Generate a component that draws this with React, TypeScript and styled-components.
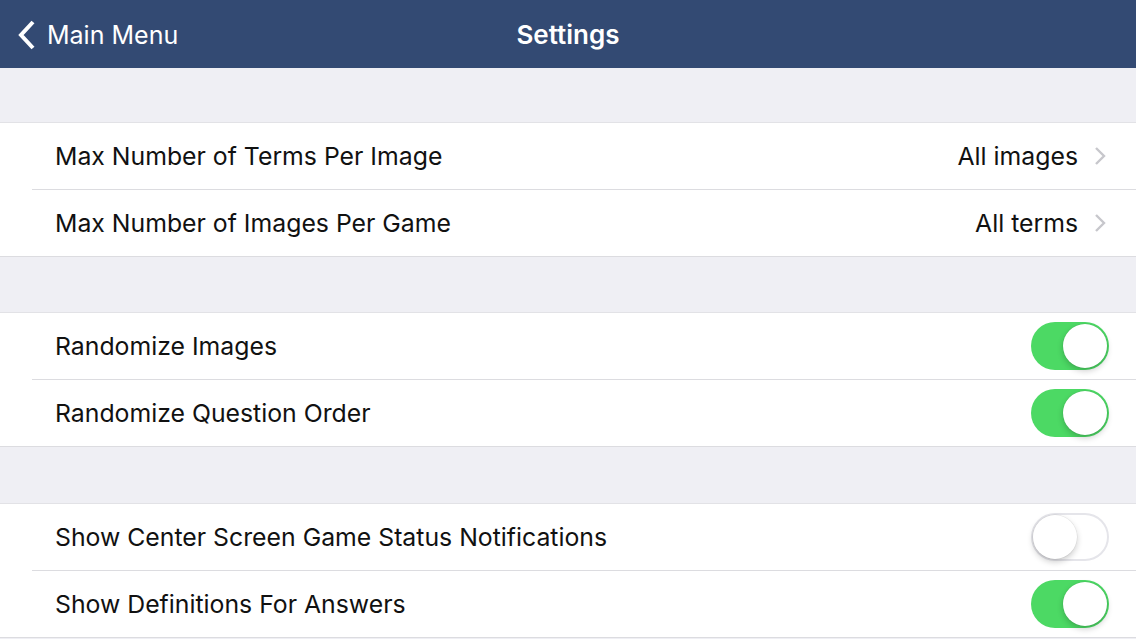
import React from "react";
import styled, { createGlobalStyle } from "styled-components";

const Global = createGlobalStyle`
  html, body { margin: 0; padding: 0; background: #efeff4; }
  body { font-family: Inter, "Liberation Sans", Arial, sans-serif; -webkit-font-smoothing: antialiased; }
  * { box-sizing: border-box; }
`;

const Page = styled.div`
  width: 1136px;
  height: 639px;
  overflow: hidden;
  background: #efeff4;
  display: flex;
  flex-direction: column;
`;

const NavBar = styled.header`
  height: 68px;
  flex-shrink: 0;
  background: #334a73;
  display: grid;
  grid-template-columns: 1fr auto 1fr;
  align-items: center;
  padding: 0 18px;
  color: #ffffff;
`;

const BackButton = styled.div`
  display: flex;
  align-items: center;
  gap: 11px;
  font-size: 25px;
  padding-top: 2px;
`;

const Title = styled.div`
  font-size: 26px;
  font-weight: 600;
  padding-top: 1px;
`;

const Spacer = styled.div<{ $h: number }>`
  height: ${(p) => p.$h}px;
  flex-shrink: 0;
`;

const Group = styled.section`
  background: #ffffff;
  border-top: 1px solid #e2e2e6;
  border-bottom: 1px solid #dcdce0;
  flex-shrink: 0;
`;

const Row = styled.div<{ $last?: boolean }>`
  height: ${(p) => (p.$last ? 66 : 67)}px;
  margin-left: 32px;
  padding: 0 27px 0 23px;
  display: flex;
  align-items: center;
  justify-content: space-between;
  border-bottom: ${(p) => (p.$last ? "none" : "1px solid #dcdce0")};
`;

const Label = styled.span`
  font-size: 24.8px;
  color: #111111;
  padding-bottom: 1px;
`;

const Detail = styled.div`
  display: flex;
  align-items: center;
  gap: 16px;
  font-size: 24.8px;
  color: #111111;
  margin-right: 3px;
  padding-bottom: 1px;
`;

const Track = styled.div<{ $on: boolean }>`
  width: 78px;
  height: 48px;
  border-radius: 24px;
  position: relative;
  background: ${(p) => (p.$on ? "#4cd964" : "#ffffff")};
  box-shadow: ${(p) => (p.$on ? "none" : "inset 0 0 0 2px #e5e5ea")};
`;

const Knob = styled.div<{ $on: boolean }>`
  position: absolute;
  top: 2px;
  left: ${(p) => (p.$on ? "32px" : "2px")};
  width: 44px;
  height: 44px;
  border-radius: 50%;
  background: #ffffff;
  box-shadow: 0 3px 6px rgba(0, 0, 0, 0.2), 0 0 0 0.5px rgba(0, 0, 0, 0.08);
`;

const Toggle = ({ on }: { on: boolean }) => (
  <Track $on={on}>
    <Knob $on={on} />
  </Track>
);

const Chevron = () => (
  <svg width="12" height="20" viewBox="0 0 12 20">
    <path d="M2 2 L10 10 L2 18" fill="none" stroke="#c7c7cc" strokeWidth="2.4" />
  </svg>
);

const BackChevron = () => (
  <svg width="18" height="32" viewBox="0 0 18 32">
    <path d="M15 3 L3 16 L15 29" fill="none" stroke="#ffffff" strokeWidth="4" />
  </svg>
);

export default function App() {
  return (
    <Page>
      <Global />
      <NavBar>
        <BackButton>
          <BackChevron />
          <span>Main Menu</span>
        </BackButton>
        <Title>Settings</Title>
        <div />
      </NavBar>
      <Spacer $h={54} />
      <Group>
        <Row>
          <Label>Max Number of Terms Per Image</Label>
          <Detail>
            All images <Chevron />
          </Detail>
        </Row>
        <Row $last>
          <Label>Max Number of Images Per Game</Label>
          <Detail>
            All terms <Chevron />
          </Detail>
        </Row>
      </Group>
      <Spacer $h={55} />
      <Group>
        <Row>
          <Label>Randomize Images</Label>
          <Toggle on />
        </Row>
        <Row $last>
          <Label>Randomize Question Order</Label>
          <Toggle on />
        </Row>
      </Group>
      <Spacer $h={56} />
      <Group>
        <Row>
          <Label>Show Center Screen Game Status Notifications</Label>
          <Toggle on={false} />
        </Row>
        <Row $last>
          <Label>Show Definitions For Answers</Label>
          <Toggle on />
        </Row>
      </Group>
    </Page>
  );
}
